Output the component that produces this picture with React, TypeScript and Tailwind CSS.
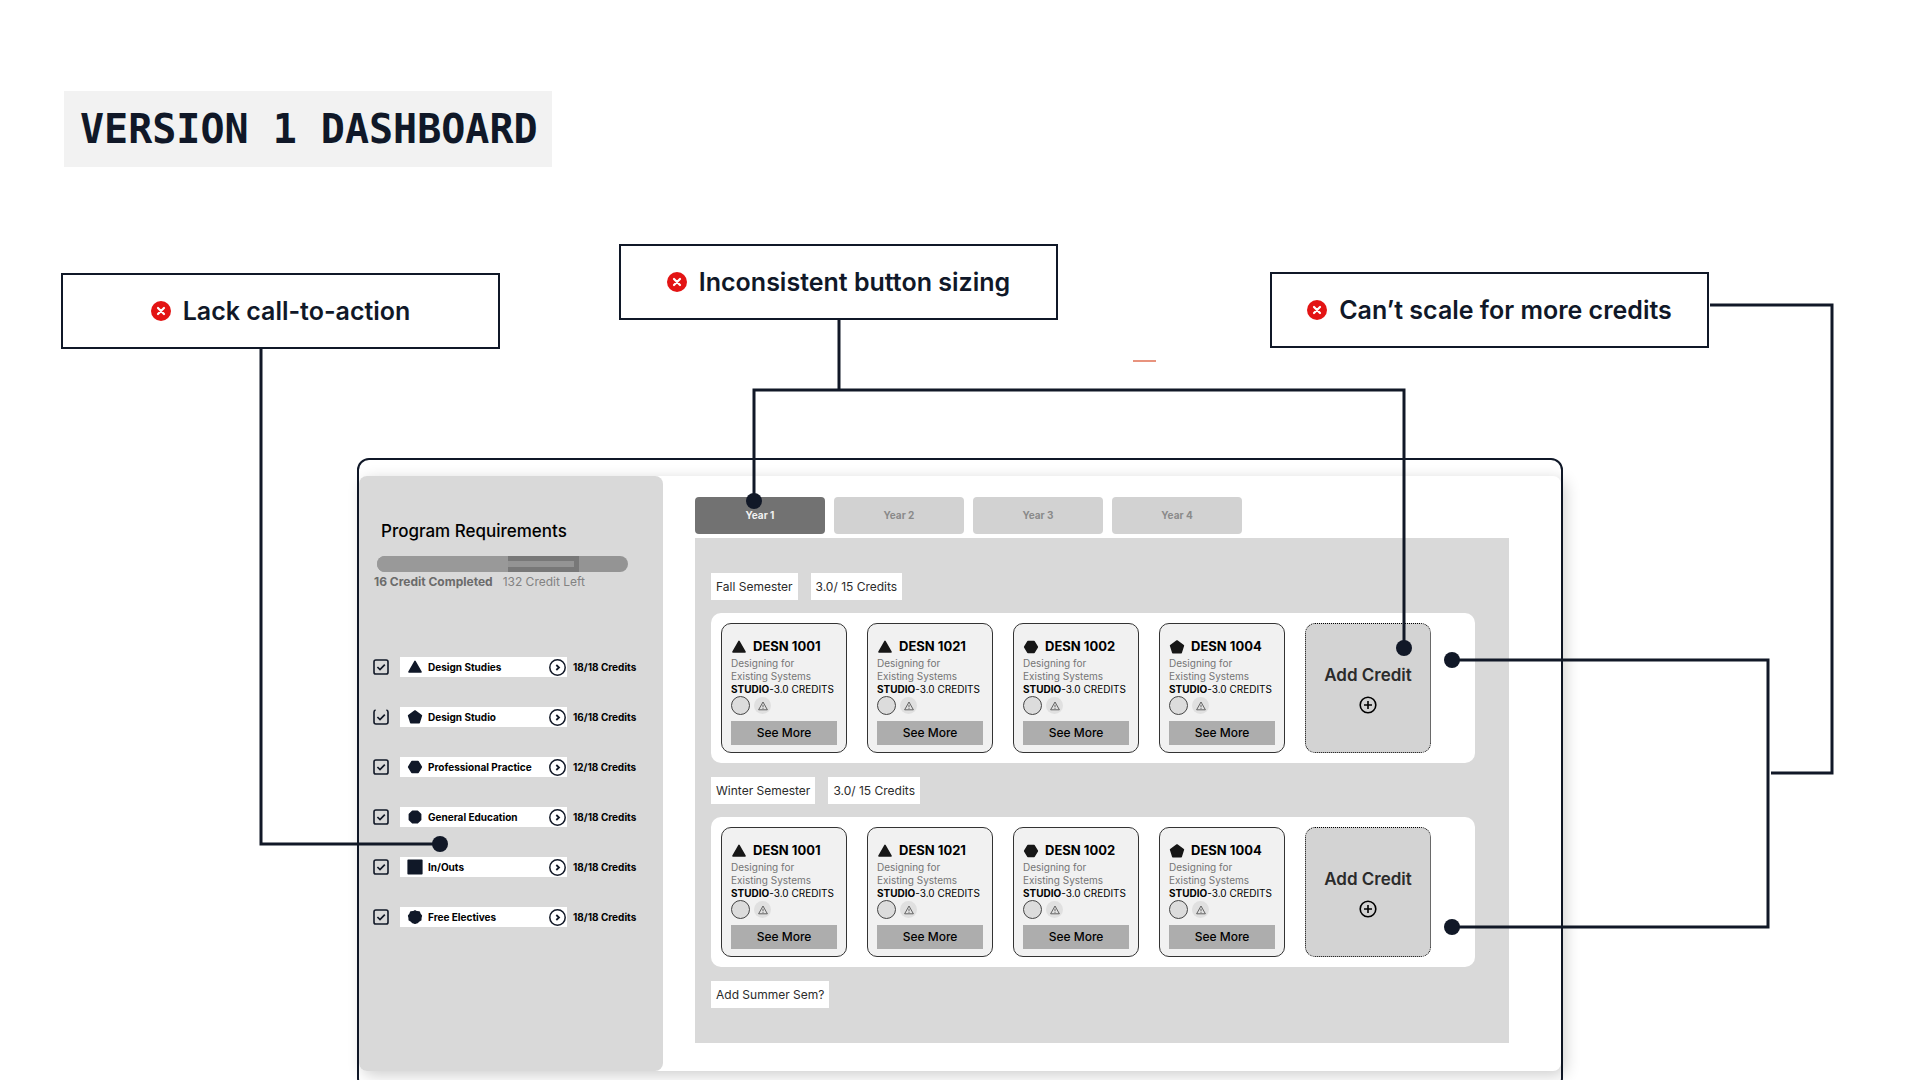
import React, { useState } from "react";

type ShapeName = "triangle" | "pentagon" | "hexagon" | "octagon" | "square" | "decagon";

const shapePaths: Record<ShapeName, string> = {
  triangle: "M8 2.4 L14 13 H2 Z",
  pentagon: "M8 2 L14.4 6.6 L12.2 13.6 H3.8 L1.6 6.6 Z",
  hexagon: "M4.9 2.6 H11.1 L14.3 8 L11.1 13.4 H4.9 L1.7 8 Z",
  octagon: "M5.5 2.2 H10.5 L13.6 5.3 V10.7 L10.5 13.8 H5.5 L2.4 10.7 V5.3 Z",
  square: "M1.2 1.2 H14.8 V14.8 H1.2 Z",
  decagon:
    "M8 1.9 L9.9 2.9 L12.2 3.1 L12.9 5.1 L14.3 6.7 L13.8 8.8 L13.7 10.9 L11.8 12 L10.2 13.6 L8 14.2 L5.8 13.6 L4.2 12 L2.3 10.9 L2.2 8.8 L1.7 6.7 L3.1 5.1 L3.8 3.1 L6.1 2.9 Z",
};

function Shape({ name, className }: { name: ShapeName; className: string }) {
  return (
    <svg viewBox="0 0 16 16" className={className} aria-hidden="true">
      <path d={shapePaths[name]} fill="currentColor" stroke="currentColor" strokeWidth="1.6" strokeLinejoin="round" />
    </svg>
  );
}

function Callout({ text, className }: { text: string; className: string }) {
  return (
    <div
      className={`flex h-[76px] w-[439px] items-center justify-center gap-3 border-2 border-gray-900 bg-white text-[25px] leading-8 font-semibold text-gray-900 ${className}`}
    >
      <svg viewBox="0 0 20 20" className="size-5 shrink-0" aria-hidden="true">
        <circle cx="10" cy="10" r="10" fill="#e31414" />
        <path d="M7 7 L13 13 M13 7 L7 13" stroke="#fff" strokeWidth="2.2" strokeLinecap="round" />
      </svg>
      <p className="whitespace-nowrap">{text}</p>
    </div>
  );
}

function Connectors() {
  return (
    <svg className="pointer-events-none absolute top-0 left-0 h-[1080px] w-[1920px]" viewBox="0 0 1920 1080" aria-hidden="true">
      <g fill="none" stroke="#111827" strokeWidth="3">
        <path d="M261 349 V844 H440" />
        <path d="M839 320 V390" />
        <path d="M754 501 V390 H1404 V648" />
        <path d="M1710 305 H1832 V773 H1771" />
        <path d="M1452 660 H1768 V927 H1452" />
      </g>
      <path d="M1133 361 H1156" stroke="#e8937e" strokeWidth="2" />
      <g fill="#111827">
        <circle cx="440" cy="844" r="8" />
        <circle cx="754" cy="501" r="8" />
        <circle cx="1404" cy="648" r="8" />
        <circle cx="1452" cy="660" r="8" />
        <circle cx="1452" cy="927" r="8" />
      </g>
    </svg>
  );
}

const requirements: { id: string; name: string; shape: ShapeName; credits: string; openBox?: boolean }[] = [
  { id: "studies", name: "Design Studies", shape: "triangle", credits: "18/18 Credits" },
  { id: "studio", name: "Design Studio", shape: "pentagon", credits: "16/18 Credits", openBox: true },
  { id: "practice", name: "Professional Practice", shape: "hexagon", credits: "12/18 Credits" },
  { id: "general", name: "General Education", shape: "octagon", credits: "18/18 Credits" },
  { id: "inouts", name: "In/Outs", shape: "square", credits: "18/18 Credits" },
  { id: "electives", name: "Free Electives", shape: "decagon", credits: "18/18 Credits" },
];

function Sidebar() {
  return (
    <aside className="w-[304px] shrink-0 rounded-lg bg-[#d9d9d9] pt-[43px]">
      <h2 className="pl-[22px] text-[17px] leading-6 font-medium text-black">Program Requirements</h2>
      <div
        role="progressbar"
        aria-label="Credits completed"
        aria-valuemin={0}
        aria-valuemax={148}
        aria-valuenow={16}
        className="mt-[13px] ml-[18px] flex h-4 w-[251px] overflow-hidden rounded-full bg-[#949494]"
      >
        <div className="w-[131px] bg-[#999999]" />
        <div className="w-[71px] border-y-[5px] border-r-[5px] border-[#787878]" />
      </div>
      <div className="flex gap-[10px] pl-[15px] text-xs leading-5 text-[#828282]">
        <p className="font-bold text-[#6b6b6b]">16 Credit Completed</p>
        <p>132 Credit Left</p>
      </div>
      <ul className="mt-[65px] flex flex-col gap-[30px] pl-[14px]">
        {requirements.map((r) => (
          <li key={r.id} className="flex h-5 items-center">
            <span className="grid size-4 place-items-center">
              <input
                id={r.id}
                type="checkbox"
                defaultChecked
                className="peer col-start-1 row-start-1 size-4 appearance-none"
              />
              <svg
                viewBox="0 0 16 16"
                className="pointer-events-none col-start-1 row-start-1 size-4"
                fill="none"
                stroke="#111827"
                aria-hidden="true"
              >
                {r.openBox ? (
                  <path
                    d="M2.6 1 C1.4 1.3 1 2 1 3 V13 Q1 15 3 15 H13 Q15 15 15 13 V3 C15 2 14.6 1.3 13.4 1"
                    strokeWidth="1.6"
                  />
                ) : (
                  <rect x="1" y="1" width="14" height="14" rx="1.8" strokeWidth="1.6" />
                )}
                <path d="M4.4 8 L7 10.6 L11.8 5.6" strokeWidth="1.7" />
              </svg>
            </span>
            <div className="ml-[11px] flex h-5 w-[167px] items-center bg-white pr-px pl-[7px]">
              <Shape name={r.shape} className="size-4 text-gray-900" />
              <label htmlFor={r.id} className="ml-[5px] flex-1 text-[10px] font-bold whitespace-nowrap text-black">
                {r.name}
              </label>
              <button type="button" aria-label={`Open ${r.name}`}>
                <svg viewBox="0 0 17 17" className="size-[17px]" fill="none" stroke="#111827" strokeWidth="1.5" aria-hidden="true">
                  <circle cx="8.5" cy="8.5" r="7.7" />
                  <path d="M7.3 6 L10 8.5 L7.3 11" strokeWidth="1.8" />
                </svg>
              </button>
            </div>
            <p className="ml-1.5 text-[10px] font-bold whitespace-nowrap text-black">{r.credits}</p>
          </li>
        ))}
      </ul>
    </aside>
  );
}

const courses: { code: string; shape: ShapeName }[] = [
  { code: "DESN 1001", shape: "triangle" },
  { code: "DESN 1021", shape: "triangle" },
  { code: "DESN 1002", shape: "hexagon" },
  { code: "DESN 1004", shape: "pentagon" },
];

function CourseCard({ code, shape }: { code: string; shape: ShapeName }) {
  return (
    <article className="flex h-[130px] w-[126px] shrink-0 flex-col rounded-[10px] border border-[#333] bg-[#f1f1f1] px-[9px] pt-[13px] text-black">
      <div className="flex h-5 items-center gap-1.5">
        <Shape name={shape} className="size-4 text-[#171717]" />
        <h3 className="text-[13px] font-bold whitespace-nowrap">{code}</h3>
      </div>
      <p className="text-[10px] leading-[13px] text-[#757575]">
        Designing for
        <br />
        Existing Systems
      </p>
      <p className="text-[10px] leading-[13px] whitespace-nowrap">
        <b className="font-bold">STUDIO</b>-3.0 CREDITS
      </p>
      <div className="flex h-[19px] items-center gap-1">
        <span className="size-[19px] rounded-full border border-[#444] bg-[#dcdcdc]" />
        <span className="flex size-[17px] items-center justify-center rounded-full bg-[#e0e0e0]">
          <svg viewBox="0 0 10 10" className="size-[10px]" fill="none" stroke="#555" strokeWidth="0.9" strokeLinejoin="round" aria-hidden="true">
            <path d="M5 1 L9.4 8.8 H0.6 Z" />
            <path d="M5 3.8 V6.3 M5 7.1 V7.9" />
          </svg>
        </span>
      </div>
      <button type="button" className="mt-1.5 h-6 bg-[#adadad] text-xs font-medium">
        See More
      </button>
    </article>
  );
}

function Tag({ children }: { children: React.ReactNode }) {
  return <p className="h-[27px] bg-white px-[5px] text-xs leading-[27px] text-[#2b2b2b]">{children}</p>;
}

function Semester({ name }: { name: string }) {
  return (
    <section className="flex flex-col gap-[13px]">
      <div className="flex gap-[13px]">
        <Tag>{name}</Tag>
        <Tag>3.0/ 15 Credits</Tag>
      </div>
      <div className="flex gap-5 rounded-[10px] bg-white p-[10px]">
        {courses.map((c) => (
          <CourseCard key={c.code} {...c} />
        ))}
        <button
          type="button"
          className="flex h-[130px] w-[126px] shrink-0 flex-col items-center rounded-[10px] border border-dotted border-black bg-[#d3d3d3] pt-[39px] text-[17px] leading-6 font-semibold text-[#2b2b2b]"
        >
          Add Credit
          <svg viewBox="0 0 18 18" className="mt-[9px] size-[18px]" fill="none" stroke="#000" strokeWidth="1.6" aria-hidden="true">
            <circle cx="9" cy="9" r="7.8" />
            <path d="M9 5 V13 M5 9 H13" />
          </svg>
        </button>
      </div>
    </section>
  );
}

function Planner() {
  const [active, setActive] = useState(0);
  return (
    <main className="min-w-0 flex-1 pt-[21px] pr-[52px] pb-7 pl-8">
      <div role="tablist" className="flex gap-[9px]">
        {["Year 1", "Year 2", "Year 3", "Year 4"].map((year, i) => (
          <button
            key={year}
            type="button"
            role="tab"
            aria-selected={i === active}
            onClick={() => setActive(i)}
            className={
              i === active
                ? "h-[37px] w-[130px] rounded bg-[#727272] text-[10px] font-bold text-[#f1f1f1]"
                : "h-[37px] w-[130px] rounded bg-[#d2d2d2] text-[10px] font-bold text-[#8a8a8a]"
            }
          >
            {year}
          </button>
        ))}
      </div>
      <div className="mt-1 flex flex-col gap-[14px] bg-[#d9d9d9] pt-[35px] pr-[34px] pb-[35px] pl-4">
        <Semester name="Fall Semester" />
        <Semester name="Winter Semester" />
        <button type="button" className="h-[27px] self-start bg-white px-[5px] text-xs text-[#2b2b2b]">
          Add Summer Sem?
        </button>
      </div>
    </main>
  );
}

export default function App() {
  return (
    <div className="relative h-screen overflow-hidden bg-white font-['Inter',sans-serif]">
      <header className="flex pt-[91px] pl-16">
        <h1 className="bg-[#f2f2f2] pr-[14px] pl-4 text-[40px] leading-[76px] font-bold whitespace-nowrap text-gray-900 font-['DejaVu_Sans_Mono',monospace]">
          VERSION 1 DASHBOARD
        </h1>
      </header>
      <div className="mt-[77px] flex items-start pl-[61px]">
        <Callout text="Lack call-to-action" className="mt-[29px]" />
        <Callout text="Inconsistent button sizing" className="ml-[119px]" />
        <Callout text="Can’t scale for more credits" className="mt-7 ml-[212px]" />
      </div>
      <div className="mx-[357px] mt-[109px] rounded-xl border-2 border-gray-900 pt-4 pb-[17px]">
        <div className="flex rounded-lg bg-white shadow-[4px_4px_16px_rgba(0,0,0,0.2)]">
          <Sidebar />
          <Planner />
        </div>
      </div>
      <Connectors />
    </div>
  );
}
